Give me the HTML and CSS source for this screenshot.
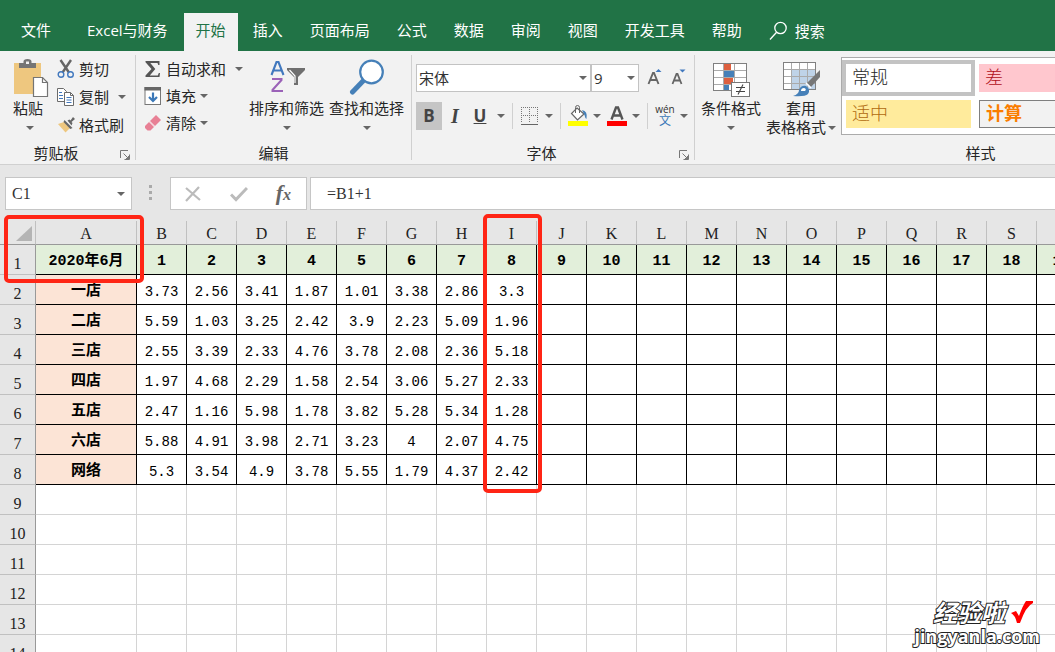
FILE: index.html
```html
<!DOCTYPE html>
<html lang="zh-CN">
<head>
<meta charset="utf-8">
<title>Excel</title>
<link rel="stylesheet" href="styles.css">
</head>
<body>
<div class="app">
<nav class="tabs">
  <button class="tab file">文件</button>
  <button class="tab">Excel与财务</button>
  <button class="tab active">开始</button>
  <button class="tab">插入</button>
  <button class="tab">页面布局</button>
  <button class="tab">公式</button>
  <button class="tab">数据</button>
  <button class="tab">审阅</button>
  <button class="tab">视图</button>
  <button class="tab">开发工具</button>
  <button class="tab">帮助</button>
  <button class="tab search"><svg width="19" height="20" viewBox="0 0 19 20" fill="none" stroke="#fff" stroke-width="1.3"><circle cx="11.5" cy="7" r="5.7"/><path d="M7.6 11.2L1 18.5"/></svg>搜索</button>
</nav>

<section class="ribbon">
  <div class="group clipboard">
    <div class="body">
      <button class="big paste">
        <svg width="36" height="40" viewBox="0 0 36 40"><rect x="1" y="4" width="27" height="31" fill="#eec77f"/><path d="M6 9V4h4.500V2.500Q10.500 0 14.500 0t4 2.500V4H23v5z" fill="#757575"/><rect x="13" y="2.500" width="3" height="2.500" fill="#f2f2f2"/><path d="M20.500 18.500h9l5 5v14h-14z" fill="#fff" stroke="#757575" stroke-width="1.200"/><path d="M29.500 18.500v5h5" fill="none" stroke="#757575" stroke-width="1.200"/></svg>
        <span>粘贴</span><i class="caret"></i>
      </button>
      <div class="rows">
        <button class="row"><svg width="18" height="20" viewBox="0 0 18 20" fill="none"><path d="M3.500 1L12 13.500M14 1L5.500 13.500" stroke="#666" stroke-width="2.400"/><circle cx="4" cy="15.500" r="2.800" stroke="#4178be" stroke-width="1.400" fill="#f2f2f2"/><circle cx="13.500" cy="15.500" r="2.800" stroke="#4178be" stroke-width="1.400" fill="#f2f2f2"/></svg>剪切</button>
        <button class="row"><svg width="18" height="20" viewBox="0 0 18 20"><g fill="#fff" stroke="#6b6b6b"><path d="M.5 1.500h6l3 3v10h-9z"/><path d="M7.500 5.500h6l3 3v10h-9z"/></g><path d="M2 5.500h3M2 8.500h4M2 11.500h4M9.500 10.500h5M9.500 13h5M9.500 15.500h5" stroke="#4178be" stroke-width="1.100"/><path d="M13.500 5.500v3h3" fill="none" stroke="#6b6b6b"/></svg>复制<i class="caret far"></i></button>
        <button class="row"><svg width="18" height="20" viewBox="0 0 18 20"><path d="M1 9l6-2 6 6-4.500 4.500z" fill="#eec77f"/><path d="M7.500 5l8 8-2.200 1L6.500 7z" fill="#666"/><path d="M10.500 5.500l2-1 1 1L16 2l2 2-3.500 3 1 1-1 2.500z" fill="#666"/></svg>格式刷</button>
      </div>
    </div>
    <div class="label"><span>剪贴板</span><button class="launcher" aria-label="剪贴板选项"><svg width="10" height="10" viewBox="0 0 10 10" fill="none" stroke="#777"><path d="M.5 8V.5H8M3.500 3.500L8 8M9.500 4.500v5h-5"/><path d="M9 6v3H6z" fill="#777"/></svg></button></div>
  </div>

  <div class="group editing">
    <div class="body">
      <div class="rows">
        <button class="row"><svg width="18" height="18" viewBox="0 0 18 18"><path d="M1.500 1h14v4h-1.200l-.8-2H6.300l5 6-5.500 6.500h8l1-2.500H16L15.500 17h-14v-1.500L7.500 9l-6-6.800z" fill="#555"/></svg>自动求和<i class="caret far"></i></button>
        <button class="row"><svg width="18" height="18" viewBox="0 0 18 18"><rect x="1" y=".5" width="15.500" height="17" fill="#fff" stroke="#777"/><path d="M.5 0h16.500v3.500H.5z" fill="#666"/><path d="M9 5.500v8M5 10l4 4 4-4" stroke="#3b78b8" stroke-width="2.200" fill="none"/></svg>填充<i class="caret"></i></button>
        <button class="row"><svg width="18" height="18" viewBox="0 0 18 18"><path d="M6 7l6-6 5 5-6 6z" fill="#e88095"/><path d="M5 8l5 5-3.500 3.500h-3L1 14v-2z" fill="#e88095"/><path d="M5.500 7.500l5 5" stroke="#f7d5dc" stroke-width="1"/></svg>清除<i class="caret"></i></button>
      </div>
      <button class="big">
        <svg width="36" height="40" viewBox="0 0 36 40"><path d="M2.500 16L7.500 3h2l5 13M4.300 11.500h8.400" fill="none" stroke="#4178be" stroke-width="2.100"/><path d="M3 20h9.500v1L3.500 31v1H14" fill="none" stroke="#9b62b8" stroke-width="2"/><path d="M18 9h18v2l-7 7v8h-4v-8l-7-7z" fill="#6f6f6f"/><path d="M20.500 11l5.500 6v7" fill="none" stroke="#fff" stroke-width="1.200"/></svg>
        <span>排序和筛选</span><i class="caret"></i>
      </button>
      <button class="big">
        <svg width="36" height="40" viewBox="0 0 36 40"><path d="M15 21L3.500 33" stroke="#4680b8" stroke-width="5" stroke-linecap="round"/><circle cx="22.500" cy="13" r="11.300" fill="#fff" stroke="#4680b8" stroke-width="2.200"/></svg>
        <span>查找和选择</span><i class="caret"></i>
      </button>
    </div>
    <div class="label"><span>编辑</span></div>
  </div>

  <div class="group font">
    <div class="body stack">
      <div class="line">
        <span class="combo name"><select aria-label="字体"><option>宋体</option></select></span>
        <span class="combo size"><select aria-label="字号"><option>9</option></select></span>
        <button class="grow" aria-label="增大字号"><svg width="16" height="20" viewBox="0 0 16 20"><path d="M1.500 16L6 5h1l4.500 11M3.200 12h6.600" fill="none" stroke="#666" stroke-width="1.900"/><path d="M8.500 4L11.500 1l3 3z" fill="#4178be"/></svg></button>
        <button class="grow" aria-label="减小字号"><svg width="16" height="20" viewBox="0 0 16 20"><path d="M1.500 16L5.500 6h1l4 10M3 12.500h6" fill="none" stroke="#666" stroke-width="1.800"/><path d="M8.500 1.500l3 3 3-3z" fill="#4178be"/></svg></button>
      </div>
      <div class="line tools">
        <button class="tool bold">B</button>
        <button class="tool italic">I</button>
        <button class="tool under"><u>U</u></button><i class="caret"></i>
        <i class="sep"></i>
        <button class="tool" aria-label="边框"><svg width="18" height="20" viewBox="0 0 18 20"><path d="M.5 1v16M8.500 1v16M16.500 1v16M0 1.500h17M0 9.500h17" stroke="#777" stroke-dasharray="1 1"/><path d="M0 18.500h17" stroke="#666"/></svg></button><i class="caret"></i>
        <i class="sep"></i>
        <button class="tool" aria-label="填充颜色"><svg width="20" height="22" viewBox="0 0 20 22"><path d="M9 3l7 6-6.500 6L3.500 8.500z" fill="#fff" stroke="#666" stroke-width="1.200"/><path d="M7.500 8V2.500q0-2 2-2t2 2V8" fill="none" stroke="#666"/><path d="M14 5q6 1 4.500 9-1.500-1-2-4z" fill="#4680b8"/><path d="M0 16h20v5H0z" fill="#ff0"/></svg></button><i class="caret"></i>
        <button class="tool color" aria-label="字体颜色"><svg width="20" height="22" viewBox="0 0 20 22"><path d="M4.500 14.500L9 2.500h2l4.500 12M6.200 10.500h7.600" fill="none" stroke="#555" stroke-width="2.400"/><path d="M0 16h20v5H0z" fill="red"/></svg></button><i class="caret"></i>
        <i class="sep"></i>
        <button class="tool phonetic"><span>wén</span><b>文</b></button><i class="caret"></i>
      </div>
    </div>
    <div class="label"><span>字体</span><button class="launcher" aria-label="字体选项"><svg width="10" height="10" viewBox="0 0 10 10" fill="none" stroke="#777"><path d="M.5 8V.5H8M3.500 3.500L8 8M9.500 4.500v5h-5"/><path d="M9 6v3H6z" fill="#777"/></svg></button></div>
  </div>

  <div class="group styles">
    <div class="body">
      <button class="big">
        <svg width="38" height="40" viewBox="0 0 38 40"><rect x="1.500" y="4.500" width="33" height="27" fill="#fff"/><path d="M12 5h7v6h-7zM12 19h9v6h-9z" fill="#dd6040"/><path d="M12 12h11v6H12zM12 26h5v5h-5z" fill="#4680b8"/><path d="M1 11.500h33M1 18.500h33M1 25.500h33M11.500 4v27M22.500 4v27" stroke="#aaa"/><rect x="1.500" y="4.500" width="33" height="27" fill="none" stroke="#808080"/><rect x="19.500" y="23.500" width="18" height="14" fill="#fff" stroke="#777"/><path d="M24 28.500h9M24 32.500h9M31 25.500l-5 10" stroke="#444" stroke-width="1.100"/></svg>
        <span>条件格式</span><i class="caret"></i>
      </button>
      <button class="big table-format">
        <svg width="38" height="40" viewBox="0 0 38 40"><rect x="1.500" y="3.500" width="32" height="27" fill="#fff"/><path d="M9 11h24v20H9z" fill="#bfd3e8"/><path d="M1 10.500h32M1 17.500h32M1 24.500h32M9.500 3v27M17.500 3v27M25.500 3v27" stroke="#aaa"/><rect x="1.500" y="3.500" width="32" height="27" fill="none" stroke="#808080"/><path d="M38 11v7L29 28l-4-4z" fill="#777"/><path d="M24 24l5 5" stroke="#fff" stroke-width="1.500"/><path d="M11 37q6-2 6-6 2-5 7-4 5 3 2 8-3 3-15 2z" fill="#4680b8"/><path d="M19 32q0-3 3-3 3 1 1 3z" fill="#fff"/></svg>
        <span>套用</span><span class="with-caret">表格格式<i class="caret"></i></span>
      </button>
      <div class="gallery">
        <button class="style normal">常规</button><button class="style bad">差</button>
        <button class="style neutral">适中</button><button class="style calc">计算</button>
      </div>
    </div>
    <div class="label"><span>样式</span></div>
  </div>
</section>

<section class="formula-bar">
  <label class="namebox"><input value="C1" aria-label="名称框"><i class="caret"></i></label>
  <i class="dots"></i>
  <div class="fx">
    <button aria-label="取消"><svg width="18" height="18" viewBox="0 0 18 18" stroke="#bbb" stroke-width="2.200" fill="none"><path d="M1 3l14 12M14 2L1 16"/></svg></button>
    <button aria-label="输入"><svg width="18" height="18" viewBox="0 0 18 18" stroke="#bbb" stroke-width="3" fill="none"><path d="M1 9.500l5 5L17 3"/></svg></button>
    <button class="fn"><i>f</i><small>x</small></button>
  </div>
  <input class="formula" value="=B1+1" aria-label="编辑栏">
</section>

<main class="sheet">
<table>
<colgroup><col class="c-head"><col class="c-a"><col span="19" class="c-n"></colgroup>
<thead><tr><th class="corner"><svg width="17" height="16" viewBox="0 0 17 16"><path d="M16 0v15H0z" fill="#b4b4b4"/></svg></th><th>A<th>B<th>C<th>D<th>E<th>F<th>G<th>H<th>I<th>J<th>K<th>L<th>M<th>N<th>O<th>P<th>Q<th>R<th>S<th>T</tr></thead>
<tbody class="data">
<tr class="days"><th>1</th><td>2020年6月<td>1<td>2<td>3<td>4<td>5<td>6<td>7<td>8<td>9<td>10<td>11<td>12<td>13<td>14<td>15<td>16<td>17<td>18<td>19</tr>
<tr><th>2</th><td>一店<td>3.73<td>2.56<td>3.41<td>1.87<td>1.01<td>3.38<td>2.86<td>3.3<td><td><td><td><td><td><td><td><td><td><td><td></tr>
<tr><th>3</th><td>二店<td>5.59<td>1.03<td>3.25<td>2.42<td>3.9<td>2.23<td>5.09<td>1.96<td><td><td><td><td><td><td><td><td><td><td><td></tr>
<tr><th>4</th><td>三店<td>2.55<td>3.39<td>2.33<td>4.76<td>3.78<td>2.08<td>2.36<td>5.18<td><td><td><td><td><td><td><td><td><td><td><td></tr>
<tr><th>5</th><td>四店<td>1.97<td>4.68<td>2.29<td>1.58<td>2.54<td>3.06<td>5.27<td>2.33<td><td><td><td><td><td><td><td><td><td><td><td></tr>
<tr><th>6</th><td>五店<td>2.47<td>1.16<td>5.98<td>1.78<td>3.82<td>5.28<td>5.34<td>1.28<td><td><td><td><td><td><td><td><td><td><td><td></tr>
<tr><th>7</th><td>六店<td>5.88<td>4.91<td>3.98<td>2.71<td>3.23<td>4<td>2.07<td>4.75<td><td><td><td><td><td><td><td><td><td><td><td></tr>
<tr><th>8</th><td>网络<td>5.3<td>3.54<td>4.9<td>3.78<td>5.55<td>1.79<td>4.37<td>2.42<td><td><td><td><td><td><td><td><td><td><td><td></tr>
</tbody>
<tbody>
<tr><th>9</th><td><td><td><td><td><td><td><td><td><td><td><td><td><td><td><td><td><td><td><td></tr>
<tr><th>10</th><td><td><td><td><td><td><td><td><td><td><td><td><td><td><td><td><td><td><td><td></tr>
<tr><th>11</th><td><td><td><td><td><td><td><td><td><td><td><td><td><td><td><td><td><td><td><td></tr>
<tr><th>12</th><td><td><td><td><td><td><td><td><td><td><td><td><td><td><td><td><td><td><td><td></tr>
<tr><th>13</th><td><td><td><td><td><td><td><td><td><td><td><td><td><td><td><td><td><td><td><td></tr>
<tr><th>14</th><td><td><td><td><td><td><td><td><td><td><td><td><td><td><td><td><td><td><td><td></tr>
</tbody>
</table>
<div class="mark mark-a"></div>
<div class="mark mark-i"></div>
</main>
<div class="watermark">
  <div class="wm-top"><span>经验啦</span><svg width="26" height="26" viewBox="0 0 26 26"><path d="M2 13l5-2 3 5Q14 5 17 1h7v2Q17 6 11 23H8Q6 15 2 13z" fill="red"/></svg></div>
  <div class="wm-url">jingyanla.com</div>
</div>
</div>
</body>
</html>
```
FILE: styles.css
```css
* { box-sizing: border-box; }
body { margin: 0; font: 15px/20px "Open Sans", "Noto Sans CJK SC", sans-serif; color: #262626; overflow: hidden; }
button { font: inherit; color: inherit; background: none; border: 0; padding: 0; margin: 0; white-space: nowrap; }
svg { display: block; flex: none; }
.app { position: relative; height: 100vh; overflow: hidden; display: flex; flex-direction: column; background: #fff; }

.tabs { flex: none; display: flex; gap: 3px; padding: 13px 0 0 9px; height: 51px; background: #217346; }
.tab { padding: 0 12px 4px; color: #fff; flex: none; }
.file { margin-right: 9px; }
.active { margin-left: 1px; background: #f2f2f2; color: #217346; }
.search { display: flex; align-items: center; gap: 7px; padding-bottom: 2px; }

.ribbon { flex: none; display: flex; height: 114px; padding: 4px 0; background: #f2f2f2; border-bottom: 1px solid #d0d0d0; overflow: hidden; }
.group { flex: none; display: flex; flex-direction: column; border-right: 1px solid #d0d0d0; }
.body { flex: none; display: flex; align-items: flex-start; height: 88px; }
.label { display: flex; height: 20px; align-items: center; text-align: center; }
.label span { flex: 1; }
.launcher { width: 15px; padding-top: 3px; }
.clipboard .label, .font .label { padding-left: 0; }
.clipboard .label span, .font .label span { padding-right: 8px; }
.caret { display: block; flex: none; width: 8px; height: 4px; border: 4px solid transparent; border-top-color: #666; border-bottom: 0; }
.big { display: flex; flex-direction: column; align-items: center; padding-top: 4px; line-height: 19px; }
.big span { margin: 0 0 8px; }
.rows { display: flex; flex-direction: column; }
.row { display: flex; align-items: center; gap: 4px; height: 28px; }
.row .far { margin-left: 5px; }
.clipboard { width: 136px; }
.clipboard .body { padding-left: 13px; gap: 8px; }
.paste { align-items: flex-start; }
.paste .caret { margin-left: 13px; }
.editing { width: 276px; }
.editing .body { padding-left: 8px; }
.editing .rows { width: 105px; }
.editing .row { height: 27px; }
.editing .big + .big { margin-left: 5px; }

.font { width: 283px; }
.stack { flex-direction: column; padding: 9px 0 0 4px; gap: 10px; }
.line { display: flex; align-items: center; height: 28px; }
.combo { position: relative; height: 28px; }
.combo select { appearance: none; width: 100%; height: 100%; padding: 0 2px; font: inherit; color: #333; background: #fff; border: 1px solid #c3c3c3; border-radius: 0; }
.combo::after { content: ""; position: absolute; right: 4px; top: 12px; border: 4px solid transparent; border-top-color: #666; border-bottom: 0; }
.name { width: 175px; }
.size { width: 48px; margin-left: 0; }
.grow { margin-left: 8px; }
.tool { height: 28px; width: 20px; display: flex; align-items: center; justify-content: center; font-size: 17px; font-weight: bold; color: #444; }
.tools .caret { margin-left: 5px; }
.bold { width: 26px; background: #c5c5c5; }
.italic { width: 26px; font-size: 20px; font-family: "Liberation Serif", serif; font-style: italic; }
.under { width: 24px; }
.sep { width: 1px; height: 26px; margin: 0 7px; background: #d0d0d0; }
.color { margin-left: 6px; }
.phonetic { flex-direction: column; font-size: 10px; line-height: 10px; font-weight: normal; color: #333; }
.phonetic b { font-size: 12px; line-height: 14px; font-weight: normal; color: #3b78b8; }

.styles { width: 572px; }
.styles .body { padding-left: 6px; gap: 5px; }
.table-format span { margin: 0; }
.with-caret { display: flex; align-items: center; gap: 2px; }
.gallery { flex: 1; display: grid; grid-template-columns: 125px 125px 1fr; grid-template-rows: 28px 28px; gap: 8px; margin: 2px 30px 0 0; padding: 6px 4px; height: 78px; background: #fff; border: 1px solid #ababab; }
.style { text-align: left; padding-left: 6px; font-size: 18px; font-family: "Liberation Serif", "Noto Sans CJK SC", serif; font-weight: 300; }
.normal { background: #fff; outline: 4px solid #c3c3c3; }
.bad { background: #ffc7ce; color: #b01020; }
.neutral { background: #ffeb9c; color: #b06a10; grid-column: 1; }
.calc { border: 1px solid #7f7f7f; background: #f2f2f2; color: #fa7d00; font-weight: bold; }

.formula-bar { flex: none; display: flex; height: 56px; padding: 12px 0 11px 5px; background: #e6e6e6; }
.formula-bar input { font: 16px/20px "Liberation Serif", serif; color: #333; background: #fff; border: 0; min-width: 0; }
.namebox { display: flex; align-items: center; width: 127px; height: 33px; padding: 0 6px; background: #fff; border: 1px solid #c6c6c6; }
.namebox input { flex: 1; padding: 0; }
.dots { width: 3px; height: 15px; margin: 8px 18px 0 17px; background: repeating-linear-gradient(#aaa 0 3px, transparent 3px 6px); }
.fx { display: flex; align-items: center; justify-content: space-between; width: 137px; height: 33px; padding: 0 15px 0 14px; background: #fff; border: 1px solid #c6c6c6; }
.fn { font: italic bold 22px/26px "Liberation Serif", serif; color: #666; }
.fn small { font-size: 16px; }
.formula-bar .formula { flex: 1; height: 33px; margin-left: 3px; padding: 0 16px; border: 1px solid #c6c6c6; border-right: 0; }

.sheet { position: relative; flex: 1; }
table { table-layout: fixed; width: 1087px; border-spacing: 0; }
.c-head { width: 36px; }
.c-a { width: 101px; }
.c-n { width: 50px; }
th, td { height: 30px; padding: 0; text-align: center; border: solid #d4d4d4; border-width: 0 1px 1px 0; line-height: 20px; white-space: nowrap; }
th { background: #e6e6e6; font: 16px/20px "Liberation Serif", serif; color: #222; border-color: #c0c0c0; }
thead th { height: 24px; border-bottom-color: #999; padding-top: 3px; }
tbody th { padding-top: 8px; border-right-color: #999; }
.corner svg { margin-left: 16px; }
.data td { padding-top: 4px; border-color: #000; font: 14px/20px "Liberation Mono", "Noto Sans CJK SC", monospace; color: #000; }
.data td:nth-child(2) { background: #fce4d6; font-weight: bold; font-size: 15px; }
.data .days td { background: #e2efda; font-weight: bold; font-size: 15px; }
.mark { position: absolute; border: 4px solid #ff2515; border-radius: 5px; }
.mark-a { left: 4px; top: -6px; width: 140px; height: 68px; }
.mark-i { left: 483px; top: -7px; width: 59px; height: 279px; }

.watermark { position: absolute; right: 15px; bottom: 6px; color: #fff; font-weight: bold; -webkit-text-stroke: 2px #222; paint-order: stroke fill; }
.wm-top { display: flex; justify-content: flex-end; gap: 4px; margin-right: 5px; font-size: 24px; line-height: 26px; font-style: italic; }
.wm-url { font-size: 18px; line-height: 20px; text-align: right; }
```
